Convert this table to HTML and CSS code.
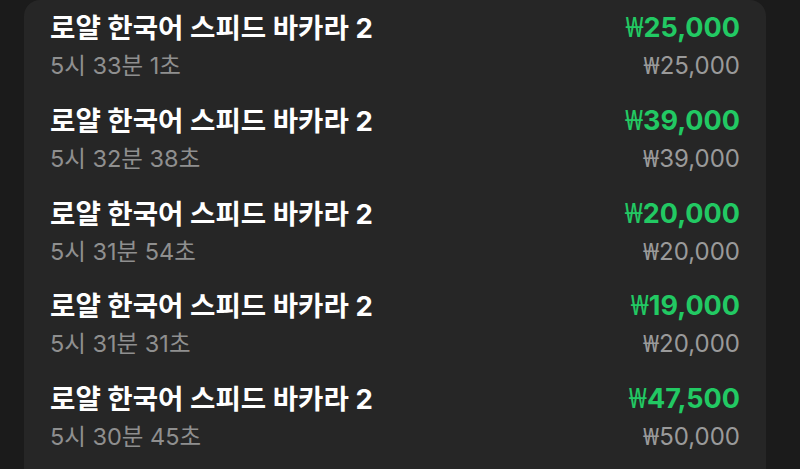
FILE: index.html
```html
<!DOCTYPE html>
<html lang="ko">
<head>
<meta charset="utf-8">
<link rel="stylesheet" href="styles.css">
</head>
<body>
<div class="card">
  <div class="row">
    <div class="info"><div class="title">로얄 한국어 스피드 바카라 2</div><div class="time">5시 33분 1초</div></div>
    <div class="amounts"><div class="win"><span class="won">₩</span>25,000</div><div class="bet"><span class="won">₩</span>25,000</div></div>
  </div>
  <div class="row">
    <div class="info"><div class="title">로얄 한국어 스피드 바카라 2</div><div class="time">5시 32분 38초</div></div>
    <div class="amounts"><div class="win"><span class="won">₩</span>39,000</div><div class="bet"><span class="won">₩</span>39,000</div></div>
  </div>
  <div class="row">
    <div class="info"><div class="title">로얄 한국어 스피드 바카라 2</div><div class="time">5시 31분 54초</div></div>
    <div class="amounts"><div class="win"><span class="won">₩</span>20,000</div><div class="bet"><span class="won">₩</span>20,000</div></div>
  </div>
  <div class="row">
    <div class="info"><div class="title">로얄 한국어 스피드 바카라 2</div><div class="time">5시 31분 31초</div></div>
    <div class="amounts"><div class="win"><span class="won">₩</span>19,000</div><div class="bet"><span class="won">₩</span>20,000</div></div>
  </div>
  <div class="row">
    <div class="info"><div class="title">로얄 한국어 스피드 바카라 2</div><div class="time">5시 30분 45초</div></div>
    <div class="amounts"><div class="win"><span class="won">₩</span>47,500</div><div class="bet"><span class="won">₩</span>50,000</div></div>
  </div>
</div>
</body>
</html>
```
FILE: styles.css
```css
html, body {
  margin: 0;
  padding: 0;
  background: #1b1b1b;
  height: 469px;
  overflow: hidden;
}
body {
  font-family: Inter, "Noto Sans CJK KR", "Noto Sans", sans-serif;
}
.card {
  margin-left: 24px;
  width: 742px;
  box-sizing: border-box;
  padding: 0 26px;
  background: #262626;
  border-radius: 16px 16px 0 0;
  min-height: 480px;
}
.row {
  height: 92.75px;
  box-sizing: border-box;
  padding-top: 9px;
  display: flex;
  justify-content: space-between;
  align-items: flex-start;
}
.title {
  color: #ffffff;
  font-size: 27.6px;
  font-weight: 700;
  line-height: 38px;
}
.time {
  margin-top: 3px;
  color: #8f8f8f;
  font-size: 23.5px;
  line-height: 32px;
}
.amounts {
  text-align: right;
}
.win {
  color: #22c963;
  font-size: 27px;
  font-weight: 700;
  line-height: 38px;
}
.bet {
  margin-top: 3px;
  color: #9a9a9a;
  font-size: 24px;
  line-height: 32px;
}
.won {
  font-family: "Noto Sans", sans-serif;
  font-weight: 400;
  line-height: 1;
}
```
